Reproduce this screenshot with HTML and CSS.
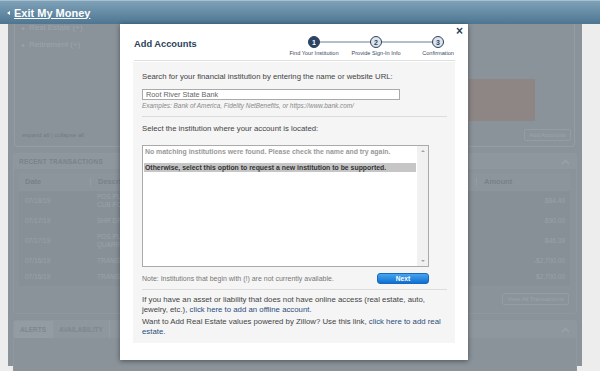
FILE: index.html
```html
<!DOCTYPE html>
<html lang="en">
<head>
  <meta charset="UTF-8">
  <title>Add Accounts</title>
  <link rel="stylesheet" href="styles.css">
</head>
<body>
  <div class="topbar">
    <a class="exit" href="#"><span class="caret"></span>Exit My Money</a>
  </div>

  <div class="page">
    <div class="column">
      <div class="accounts-box">
        <ul class="nav-list">
          <li>Real Estate (+)</li>
          <li>Retirement (+)</li>
        </ul>
        <div class="chart-row"><div class="chart-block"></div></div>
        <div class="box-foot">
          <span class="expand">expand all | collapse all</span>
          <span class="ghost-btn">Add Accounts</span>
        </div>
      </div>

      <div class="section">
        <div class="section-head">
          <span>RECENT TRANSACTIONS</span>
          <svg class="chev" width="9" height="6" viewBox="0 0 9 6"><polyline points="1,5 4.5,1.5 8,5" fill="none" stroke="#9ba4ab" stroke-width="1.2"/></svg>
        </div>
        <div class="tx-table">
          <div class="tx-row tx-head"><span>Date</span><span>Description</span><span>Amount</span></div>
          <div class="tx-row"><span>07/18/19</span><span>POS PURCHASE<br>CUB FOODS</span><span class="amt">-$84.40</span></div>
          <div class="tx-row"><span>07/17/19</span><span>SHR DRAFT</span><span class="amt">-$90.00</span></div>
          <div class="tx-row"><span>07/17/19</span><span>POS PURCHASE<br>QUARRY</span><span class="amt">-$46.39</span></div>
          <div class="tx-row"><span>07/16/19</span><span>TRANSFER</span><span class="amt">-$2,700.00</span></div>
          <div class="tx-row short"><span>07/16/19</span><span>TRANSFER</span><span class="amt">$2,700.00</span></div>
        </div>
        <div class="section-foot"><span class="ghost-btn">View All Transactions</span></div>
      </div>

      <div class="section tabs">
        <div class="tab-bar">
          <span class="tab active">ALERTS</span>
          <span class="tab">AVAILABILITY</span>
          <svg class="chev" width="9" height="6" viewBox="0 0 9 6"><polyline points="1,5 4.5,1.5 8,5" fill="none" stroke="#9ba4ab" stroke-width="1.2"/></svg>
        </div>
      </div>
    </div>
  </div>

  <div class="modal">
    <span class="close">&times;</span>
    <div class="modal-head">
      <h2>Add Accounts</h2>
      <ol class="steps">
        <li class="current"><span class="dot">1</span><span class="lbl">Find Your Institution</span></li>
        <li><span class="dot">2</span><span class="lbl">Provide Sign-In Info</span></li>
        <li><span class="dot">3</span><span class="lbl">Confirmation</span></li>
      </ol>
    </div>

    <div class="panel">
      <p class="lead">Search for your financial institution by entering the name or website URL:</p>
      <input class="search" type="text" value="Root River State Bank">
      <p class="hint">Examples: Bank of America, Fidelity NetBenefits, or https://www.bank.com/</p>
      <hr>
      <p class="lead">Select the institution where your account is located:</p>
      <div class="listbox">
        <div class="options">
          <div class="opt muted">No matching institutions were found. Please check the name and try again.</div>
          <div class="opt selected">Otherwise, select this option to request a new institution to be supported.</div>
        </div>
        <div class="scrollbar">
          <span class="arrow up"></span>
          <span class="arrow down"></span>
        </div>
      </div>
      <div class="note-row">
        <span class="note">Note: Institutions that begin with (!) are not currently available.</span>
        <button class="next">Next</button>
      </div>
      <hr>
      <p class="info">If you have an asset or liability that does not have online access (real estate, auto, jewelry, etc.), <a href="#">click here to add an offline account</a>.</p>
      <p class="info">Want to Add Real Estate values powered by Zillow? Use this link, <a href="#">click here to add real estate</a>.</p>
    </div>
  </div>
</body>
</html>
```

FILE: styles.css
```css
*{
  box-sizing: border-box;
  margin: 0;
  padding: 0;
}
body {
  font-family: "Liberation Sans", Arial, sans-serif;
  background-color: #ededed;
  width: 600px;
  height: 371px;
  overflow: hidden;
  position: relative;
}

/* top bar */
.topbar {
  position: relative;
  z-index: 2;
  height: 24px;
  background: linear-gradient(#7ea1b8, #4d7692);
  border-top: 1px solid #a8c0d0;
  display: flex;
  align-items: center;
  padding-left: 7px;
}
.exit {
  color: #fff;
  font-weight: bold;
  font-size: 11px;
  text-decoration: underline;
  display: flex;
  align-items: center;
}
.caret {
  width: 0;
  height: 0;
  border-top: 2.5px solid transparent;
  border-bottom: 2.5px solid transparent;
  border-right: 3px solid #fff;
  margin-right: 4px;
}

/* dimmed page behind the dialog */
.page {
  padding: 0 18px 0 8px;
}
.column {
  background: #8a939a;
  height: 347px;
  padding: 0 5px 0 5px;
  color: #7b848c;
}
.accounts-box {
  margin: 0 2px 0 1px;
  border: 1px solid #959da4;
  border-top: none;
  border-radius: 0 0 4px 4px;
  padding: 0 3px 6px 7px;
}
.nav-list {
  list-style: none;
  margin-top: -5px;
  font-size: 8px;
  color: #9da5ab;
}
.nav-list li {
  height: 17px;
  line-height: 17px;
}
.nav-list li::before {
  content: "\25B8";
  font-size: 6px;
  margin-right: 4px;
}
.chart-row {
  display: flex;
  justify-content: flex-end;
  padding-right: 36px;
  margin-top: 26px;
}
.chart-block {
  width: 66px;
  height: 42px;
  background: #8e8684;
}
.box-foot {
  display: flex;
  justify-content: space-between;
  align-items: center;
  margin-top: 8px;
  height: 11px;
}
.expand {
  font-size: 6px;
  color: #727b83;
}
.ghost-btn {
  border: 1px solid #959da4;
  border-radius: 2px;
  font-size: 6px;
  color: #9ba3aa;
  padding: 1px 4px;
  line-height: 8px;
}
.section {
  margin-top: 6px;
  border: 1px solid #8f989f;
  border-radius: 3px;
  background: #8a939a;
}
.section-head {
  height: 15px;
  background: #8e979e;
  display: flex;
  justify-content: space-between;
  align-items: center;
  padding: 0 6px 0 5px;
  font-size: 6.5px;
  font-weight: bold;
  letter-spacing: 0.2px;
  color: #7a838b;
}
.tx-table {
  margin: 4px 6px 0 5px;
  background: #879097;
  padding-bottom: 3px;
  font-size: 6.5px;
  color: #9aa2a9;
}
.tx-row {
  display: grid;
  grid-template-columns: 71px 1fr 94px;
  height: 20px;
  align-items: center;
}
.tx-row span {
  padding-left: 6px;
  line-height: 8px;
}
.tx-row span + span {
  padding-left: 7px;
}
.tx-row .amt {
  text-align: right;
  padding-right: 5px;
}
.tx-row.short {
  height: 12px;
}
.tx-head {
  height: 18px;
  background: #8c959c;
  font-size: 7.5px;
  font-weight: bold;
  color: #78818a;
}
.tx-head span + span {
  border-left: 1px solid #959da4;
}
.section-foot {
  display: flex;
  justify-content: flex-end;
  padding: 7px 7px 8px 0;
}
.tabs {
  margin-top: 6px;
  height: 60px;
}
.tab-bar {
  height: 17px;
  display: flex;
  align-items: center;
  background: #8e979e;
  font-size: 6.5px;
  font-weight: bold;
  color: #7e878e;
}
.tab {
  height: 17px;
  line-height: 17px;
  padding: 0 6px;
  border-right: 1px solid #959da4;
}
.tab.active {
  background: #939ca3;
}
.tab-bar .chev {
  margin-left: auto;
  margin-right: 6px;
}

/* dialog */
.modal {
  position: absolute;
  left: 120px;
  top: 24px;
  width: 348px;
  height: 336px;
  background: #fff;
  box-shadow: 0 1px 5px rgba(0, 0, 0, 0.45);
  padding: 12px 13px 0 13px;
  z-index: 3;
}
.close {
  position: absolute;
  right: 5px;
  top: 0px;
  font-size: 12px;
  font-weight: bold;
  color: #2b3f5b;
}
.modal-head {
  display: flex;
  justify-content: space-between;
  align-items: flex-start;
  height: 25px;
  border-bottom: 1px solid #dedede;
  margin-left: 1px;
}
.modal-head h2 {
  font-size: 9.3px;
  font-weight: bold;
  color: #2b3f5b;
  padding-top: 3px;
}
.steps {
  list-style: none;
  display: flex;
  gap: 6px;
  margin-right: -11px;
  position: relative;
}
.steps::before {
  content: "";
  position: absolute;
  left: 28px;
  right: 28px;
  top: 5px;
  height: 2px;
  background: #b4bec8;
}
.steps li {
  width: 56px;
  display: flex;
  flex-direction: column;
  align-items: center;
  position: relative;
}
.dot {
  width: 12px;
  height: 12px;
  border-radius: 50%;
  border: 1.5px solid #2b4260;
  background: #dfe4ea;
  color: #2b4260;
  font-size: 7px;
  font-weight: bold;
  display: flex;
  align-items: center;
  justify-content: center;
}
.steps .current .dot {
  background: #2b4260;
  color: #fff;
}
.lbl {
  font-size: 5.6px;
  color: #3a4a5e;
  margin-top: 1.5px;
  white-space: nowrap;
}
.panel {
  margin-top: 1px;
  background: #f5f5f5;
  height: 281px;
  padding: 10px 8px 0 9px;
  color: #444;
}
.lead {
  font-size: 7.75px;
  line-height: 10px;
}
.search {
  display: block;
  margin-top: 7px;
  width: 258px;
  height: 11px;
  border: 1px solid #aaa;
  background: #fff;
  font-family: inherit;
  font-size: 7.3px;
  color: #666;
  padding: 0 3px;
}
.hint {
  margin-top: 2px;
  font-size: 6.4px;
  line-height: 7px;
  font-style: italic;
  color: #888;
}
.panel hr {
  border: none;
  border-top: 1px solid #dcdcdc;
  margin: 7px 0;
}
.listbox {
  margin-top: 11px;
  width: 287px;
  height: 122px;
  border: 1px solid #aaa;
  background: #fff;
  display: flex;
}
.options {
  flex: 1;
  padding: 1px 1px 0 1px;
}
.opt {
  font-size: 6.9px;
  font-weight: bold;
  line-height: 9px;
  padding-left: 1px;
  white-space: nowrap;
}
.opt.muted {
  color: #999;
  margin-bottom: 7px;
}
.opt.selected {
  background: #c6c6c6;
  color: #333;
}
.scrollbar {
  width: 11px;
  background: #f1f1f1;
  display: flex;
  flex-direction: column;
  justify-content: space-between;
  align-items: center;
  padding: 4px 0;
}
.arrow {
  width: 0;
  height: 0;
  border-left: 2px solid transparent;
  border-right: 2px solid transparent;
}
.arrow.up {
  border-bottom: 2.5px solid #a3a3a3;
}
.arrow.down {
  border-top: 2.5px solid #a3a3a3;
}
.note-row {
  display: flex;
  justify-content: space-between;
  align-items: center;
  width: 287px;
  margin-top: 6px;
}
.note {
  font-size: 7px;
  color: #777;
}
.next {
  width: 52px;
  height: 11px;
  border: 1px solid #1769bf;
  border-radius: 3px;
  background: linear-gradient(#47a4ef, #0f70d2);
  color: #fff;
  font-family: inherit;
  font-weight: bold;
  font-size: 6.6px;
  line-height: 9px;
}
.note-row + hr {
  margin-top: 5px;
  margin-bottom: 5px;
}
.info {
  font-size: 7.8px;
  line-height: 10px;
  margin-bottom: 2px;
}
.info a {
  color: #2a4d7b;
  text-decoration: none;
}
```
